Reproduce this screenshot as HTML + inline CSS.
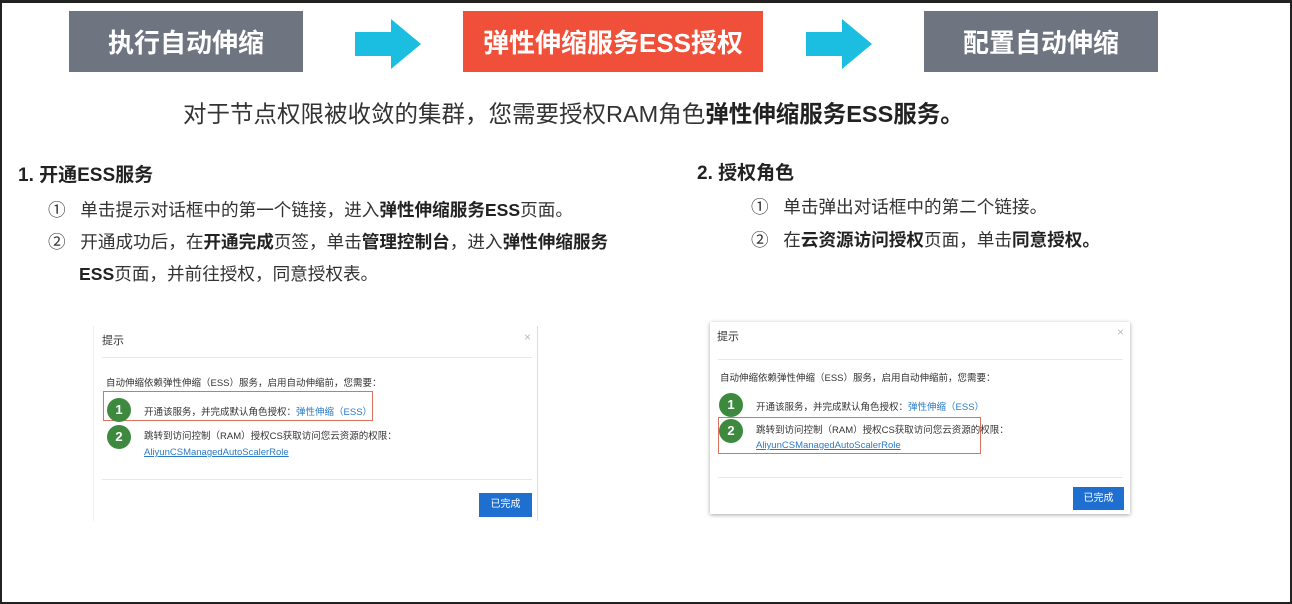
<!DOCTYPE html>
<html><head><meta charset="utf-8"><style>
*{margin:0;padding:0;box-sizing:border-box}
body{width:1292px;height:604px;background:#fff;position:relative;overflow:hidden;font-family:"Liberation Sans","Noto Sans CJK SC",sans-serif;color:#333}
.frame{position:absolute;left:0;top:0;width:1292px;height:604px;border:2px solid #222;border-top-width:3px}
.a{position:absolute;white-space:nowrap}
.box{position:absolute;top:11px;height:61px;color:#fff;font-weight:bold;font-size:26px;display:flex;align-items:center;justify-content:center}
.t{font-size:17.6px;color:#333}
.t b{color:#222}
.dlg{position:absolute;background:#fff;font-size:9.5px;color:#333}
.c{position:absolute;width:24px;height:24px;border-radius:50%;background:#3d8a3f;color:#fff;font-size:13px;font-weight:bold;text-align:center;line-height:24px}
.btn{position:absolute;background:#1f6fd1;color:#fff;font-size:10px;text-align:center}
.lk{color:#2a7ac8}
</style></head><body>
<div class="box" style="left:69px;width:234px;background:#6e7580">执行自动伸缩</div>
<svg class="a" style="left:355px;top:19px" width="66" height="50"><polygon points="0,13 36,13 36,0 66,25 36,50 36,37 0,37" fill="#1bbde0"/></svg>
<div class="box" style="left:463px;width:300px;background:#f0503a">弹性伸缩服务ESS授权</div>
<svg class="a" style="left:806px;top:19px" width="66" height="50"><polygon points="0,13 36,13 36,0 66,25 36,50 36,37 0,37" fill="#1bbde0"/></svg>
<div class="box" style="left:924px;width:234px;background:#6e7580">配置自动伸缩</div>

<div class="a" style="left:183px;top:95px;font-size:23.5px;color:#333">对于节点权限被收敛的集群，您需要授权RAM角色<b style="color:#222">弹性伸缩服务ESS服务。</b></div>

<div class="a" style="left:18px;top:160px;font-size:19px;font-weight:bold;color:#222">1. 开通ESS服务</div>
<div class="a t" style="left:48px;top:197px">①&nbsp;&nbsp; 单击提示对话框中的第一个链接，进入<b>弹性伸缩服务ESS</b>页面。</div>
<div class="a t" style="left:48px;top:229px">②&nbsp;&nbsp; 开通成功后，在<b>开通完成</b>页签，单击<b>管理控制台</b>，进入<b>弹性伸缩服务</b></div>
<div class="a t" style="left:79px;top:261px"><b>ESS</b>页面，并前往授权，同意授权表。</div>

<div class="a" style="left:697px;top:158px;font-size:19px;font-weight:bold;color:#222">2. 授权角色</div>
<div class="a t" style="left:751px;top:194px">①&nbsp;&nbsp; 单击弹出对话框中的第二个链接。</div>
<div class="a t" style="left:751px;top:227px">②&nbsp;&nbsp; 在<b>云资源访问授权</b>页面，单击<b>同意授权。</b></div>

<div class="dlg" style="left:93px;top:326px;width:445px;height:195px;border-right:1px solid #ddd;border-left:1px solid #f0f0f0">
 <div class="a" style="left:8px;top:6px;font-size:11px">提示</div>
 <div class="a" style="left:430px;top:4px;color:#bbb;font-size:12px">×</div>
 <div class="a" style="left:8px;top:31px;width:430px;border-top:1px solid #e8e8e8"></div>
 <div class="a" style="left:12px;top:49px">自动伸缩依赖弹性伸缩（ESS）服务，启用自动伸缩前，您需要：</div>
 <div class="a" style="left:9px;top:65px;width:270px;height:30px;border:1.5px solid #e07060"></div>
 <div class="c" style="left:13px;top:72px">1</div>
 <div class="a" style="left:50px;top:78px">开通该服务，并完成默认角色授权：<span class="lk">弹性伸缩（ESS）</span></div>
 <div class="c" style="left:13px;top:99px">2</div>
 <div class="a" style="left:50px;top:102px">跳转到访问控制（RAM）授权CS获取访问您云资源的权限：</div>
 <div class="a lk" style="left:50px;top:121px;text-decoration:underline">AliyunCSManagedAutoScalerRole</div>
 <div class="a" style="left:8px;top:153px;width:430px;border-top:1px solid #e8e8e8"></div>
 <div class="btn" style="left:385px;top:167px;width:53px;height:24px;line-height:24px">已完成</div>
</div>

<div class="dlg" style="left:710px;top:322px;width:420px;height:192px;box-shadow:0 1px 4px rgba(0,0,0,.35)">
 <div class="a" style="left:7px;top:6px;font-size:11px">提示</div>
 <div class="a" style="left:407px;top:3px;color:#bbb;font-size:12px">×</div>
 <div class="a" style="left:8px;top:37px;width:405px;border-top:1px solid #e8e8e8"></div>
 <div class="a" style="left:10px;top:48px">自动伸缩依赖弹性伸缩（ESS）服务，启用自动伸缩前，您需要：</div>
 <div class="c" style="left:9px;top:71px">1</div>
 <div class="a" style="left:46px;top:77px">开通该服务，并完成默认角色授权：<span class="lk">弹性伸缩（ESS）</span></div>
 <div class="a" style="left:8px;top:95px;width:263px;height:37px;border:1.5px solid #e07060"></div>
 <div class="c" style="left:9px;top:97px">2</div>
 <div class="a" style="left:46px;top:100px">跳转到访问控制（RAM）授权CS获取访问您云资源的权限：</div>
 <div class="a lk" style="left:46px;top:118px;text-decoration:underline">AliyunCSManagedAutoScalerRole</div>
 <div class="a" style="left:8px;top:155px;width:405px;border-top:1px solid #e8e8e8"></div>
 <div class="btn" style="left:363px;top:165px;width:51px;height:23px;line-height:23px">已完成</div>
</div>
<div class="frame"></div>
</body></html>
